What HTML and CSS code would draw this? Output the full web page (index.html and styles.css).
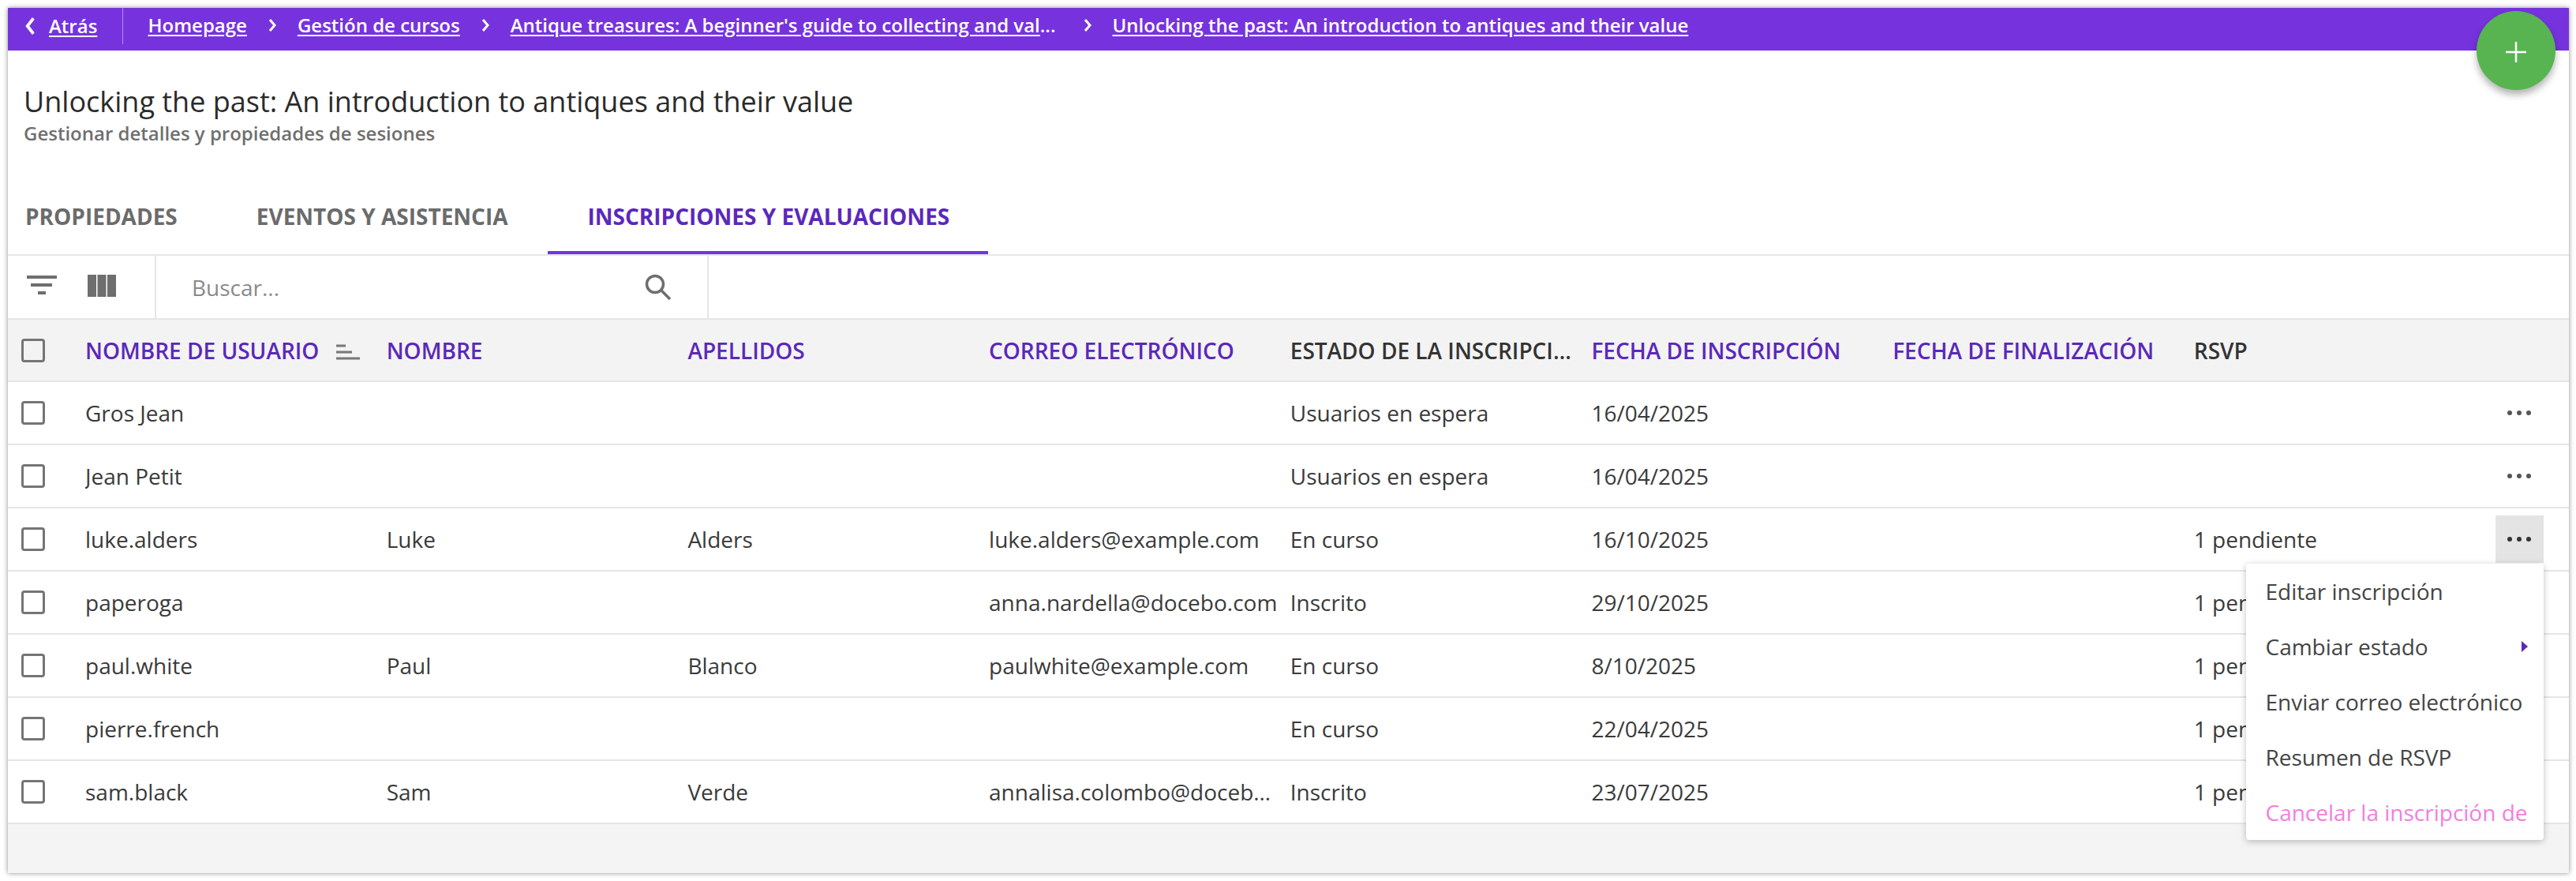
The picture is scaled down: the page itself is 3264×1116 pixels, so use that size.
FILE: index.html
```html
<!DOCTYPE html>
<html lang="es">
<head>
<meta charset="utf-8">
<title>Unlocking the past</title>
<link rel="stylesheet" href="styles.css">
</head>
<body>
<div class="frame">
  <nav class="crumbs">
    <div class="back">
      <svg class="chev-back" viewBox="0 0 12 24"><path d="M10 3 3 12l7 9"/></svg>
      <a href="#">Atrás</a>
    </div>
    <div class="trail">
      <a href="#">Homepage</a>
      <svg class="chev" viewBox="0 0 10 20"><path d="M2 3l6 7-6 7"/></svg>
      <a href="#">Gestión de cursos</a>
      <svg class="chev" viewBox="0 0 10 20"><path d="M2 3l6 7-6 7"/></svg>
      <span class="trunc"><a href="#">Antique treasures: A beginner's guide to collecting and val</a>...</span>
      <svg class="chev" viewBox="0 0 10 20"><path d="M2 3l6 7-6 7"/></svg>
      <a href="#">Unlocking the past: An introduction to antiques and their value</a>
    </div>
  </nav>
  <button class="fab" aria-label="Añadir"><svg viewBox="0 0 28 28"><path d="M14 1v26M1 14h26"/></svg></button>
  <header class="head">
    <h1>Unlocking the past: An introduction to antiques and their value</h1>
    <p>Gestionar detalles y propiedades de sesiones</p>
  </header>
  <div class="tabs">
    <a class="tab first">PROPIEDADES</a>
    <a class="tab">EVENTOS Y ASISTENCIA</a>
    <a class="tab active">INSCRIPCIONES Y EVALUACIONES</a>
  </div>
  <div class="toolbar">
    <div class="tools">
      <svg class="i-filter" viewBox="0 0 38 26"><path d="M0 3h38M5 13h27M14 23h10"/></svg>
      <svg class="i-cols" viewBox="0 0 36 28"><path d="M0 0h11v28H0zM12.500 0h11v28h-11zM25 0h11v28H25z"/></svg>
    </div>
    <div class="search">
      <span>Buscar...</span>
      <svg class="i-search" viewBox="0 0 34 34"><circle cx="13" cy="13" r="10.500"/><path d="M21 21 32 32"/></svg>
    </div>
  </div>
  <div class="table">
    <div class="row hdr">
      <div class="check"><i></i></div>
      <div class="cell link">NOMBRE DE USUARIO<svg class="i-sort" viewBox="0 0 30 20"><path d="M0 2h12M0 10h20M0 18h30"/></svg></div>
      <div class="cell link">NOMBRE</div>
      <div class="cell link">APELLIDOS</div>
      <div class="cell link">CORREO ELECTRÓNICO</div>
      <div class="cell">ESTADO DE LA INSCRIPCIÓN</div>
      <div class="cell link">FECHA DE INSCRIPCIÓN</div>
      <div class="cell link">FECHA DE FINALIZACIÓN</div>
      <div class="cell">RSVP</div>
      <div class="act"></div>
    </div>
    <div class="row">
      <div class="check"><i></i></div><div class="cell">Gros Jean</div><div class="cell"></div><div class="cell"></div><div class="cell"></div><div class="cell">Usuarios en espera</div><div class="cell">16/04/2025</div><div class="cell"></div><div class="cell"></div>
      <div class="act"><span class="dots"><svg viewBox="0 0 30 6"><circle cx="3" cy="3" r="3"/><circle cx="15" cy="3" r="3"/><circle cx="27" cy="3" r="3"/></svg></span></div>
    </div>
    <div class="row">
      <div class="check"><i></i></div><div class="cell">Jean Petit</div><div class="cell"></div><div class="cell"></div><div class="cell"></div><div class="cell">Usuarios en espera</div><div class="cell">16/04/2025</div><div class="cell"></div><div class="cell"></div>
      <div class="act"><span class="dots"><svg viewBox="0 0 30 6"><circle cx="3" cy="3" r="3"/><circle cx="15" cy="3" r="3"/><circle cx="27" cy="3" r="3"/></svg></span></div>
    </div>
    <div class="row">
      <div class="check"><i></i></div><div class="cell">luke.alders</div><div class="cell">Luke</div><div class="cell">Alders</div><div class="cell">luke.alders@example.com</div><div class="cell">En curso</div><div class="cell">16/10/2025</div><div class="cell"></div><div class="cell">1 pendiente</div>
      <div class="act">
        <span class="dots open"><svg viewBox="0 0 30 6"><circle cx="3" cy="3" r="3"/><circle cx="15" cy="3" r="3"/><circle cx="27" cy="3" r="3"/></svg></span>
        <ul class="menu">
          <li>Editar inscripción</li>
          <li class="sub">Cambiar estado<svg class="i-tri" viewBox="0 0 8 14"><path d="M0 0l8 7-8 7z"/></svg></li>
          <li>Enviar correo electrónico</li>
          <li>Resumen de RSVP</li>
          <li class="danger">Cancelar la inscripción de</li>
        </ul>
      </div>
    </div>
    <div class="row">
      <div class="check"><i></i></div><div class="cell">paperoga</div><div class="cell"></div><div class="cell"></div><div class="cell">anna.nardella@docebo.com</div><div class="cell">Inscrito</div><div class="cell">29/10/2025</div><div class="cell"></div><div class="cell">1 pendiente</div><div class="act"></div>
    </div>
    <div class="row">
      <div class="check"><i></i></div><div class="cell">paul.white</div><div class="cell">Paul</div><div class="cell">Blanco</div><div class="cell">paulwhite@example.com</div><div class="cell">En curso</div><div class="cell">8/10/2025</div><div class="cell"></div><div class="cell">1 pendiente</div><div class="act"></div>
    </div>
    <div class="row">
      <div class="check"><i></i></div><div class="cell">pierre.french</div><div class="cell"></div><div class="cell"></div><div class="cell"></div><div class="cell">En curso</div><div class="cell">22/04/2025</div><div class="cell"></div><div class="cell">1 pendiente</div><div class="act"></div>
    </div>
    <div class="row">
      <div class="check"><i></i></div><div class="cell">sam.black</div><div class="cell">Sam</div><div class="cell">Verde</div><div class="cell">annalisa.colombo@docebo.com</div><div class="cell">Inscrito</div><div class="cell">23/07/2025</div><div class="cell"></div><div class="cell">1 pendiente</div><div class="act"></div>
    </div>
  </div>
</div>
</body>
</html>
```
FILE: styles.css
```css
* { box-sizing: border-box; }
html, body { height: 100%; }
html { overflow: hidden; }
body {
  margin: 0;
  padding: 10px;
  background: #fff;
  font-family: "Open Sans", "Noto Sans", sans-serif;
  font-size: 28px;
  color: #3a3a3a;
}
.frame {
  position: relative;
  width: 3245px;
  height: 1096px;
  background: #f4f4f4;
  box-shadow: 0 0 6px rgba(0,0,0,.45);
  display: flex;
  flex-direction: column;
}
.crumbs {
  height: 54px;
  background: #7633dd;
  color: #fff;
  display: flex;
  align-items: flex-start;
  font-size: 24px;
  font-weight: 600;
  line-height: 44px;
}
.crumbs a { color: #fff; text-decoration: underline; text-underline-offset: 3px; }
.back {
  width: 145.500px;
  height: 46px;
  border-right: 1px solid rgba(255,255,255,.45);
  display: flex;
  align-items: center;
  padding-left: 20px;
  gap: 16px;
}
.chev-back { width: 16px; height: 26px; fill: none; stroke: #fff; stroke-width: 3.500; }
.trail { display: flex; align-items: center; height: 44px; padding-left: 32px; white-space: nowrap; }
.trunc { padding-right: 8px; }
.chev { width: 10px; height: 20px; margin: 0 27px; fill: none; stroke: #fff; stroke-width: 3; }
.fab {
  position: absolute;
  top: 4px;
  right: 17px;
  width: 100px;
  height: 100px;
  border: 0;
  padding: 0;
  border-radius: 50%;
  background: #57b451;
  box-shadow: 0 6px 10px rgba(0,0,0,.3);
  display: flex;
  align-items: center;
  justify-content: center;
}
.fab svg { width: 28px; height: 28px; margin-top: 4px; fill: none; stroke: #fff; stroke-width: 2.500; }
.head { height: 170px; background: #fff; padding: 40px 20px 0; }
.head h1 { margin: 0; font-size: 36px; font-weight: 500; line-height: 50px; color: #2b2b2b; }
.head p { margin: 0; font-size: 24px; font-weight: 600; line-height: 30px; color: #6f6f6f; }
.tabs {
  height: 90px;
  display: flex;
  background: #fff;
  border-bottom: 2px solid #e6e6e6;
  font-weight: 700;
  font-size: 28px;
  color: #6b6b6b;
}
.tab { padding: 0 50px; line-height: 80px; height: 88px; }
.tab.first { padding-left: 22px; }
.tab.active { color: #5b28ba; border-bottom: 4px solid #7633dd; padding: 0 49px 0 51px; }
.toolbar { height: 81px; background: #fff; display: flex; border-bottom: 2px solid #e6e6e6; }
.tools { width: 188px; border-right: 2px solid #e6e6e6; display: flex; align-items: flex-start; padding: 24px 0 0 24px; gap: 39px; }
.i-filter { width: 38px; height: 26px; fill: none; stroke: #6e6e6e; stroke-width: 4; }
.i-cols { width: 36px; height: 28px; fill: #6e6e6e; }
.search { width: 700px; border-right: 2px solid #e6e6e6; display: flex; align-items: center; justify-content: space-between; padding: 0 45px 0 45px; color: #8a8a8a; font-size: 28px; }
.i-search { width: 34px; height: 34px; fill: none; stroke: #6e6e6e; stroke-width: 3.500; }
.row {
  display: grid;
  grid-template-columns: 98px repeat(8, 381.700px) 1fr;
  height: 80px;
  align-items: center;
  background: #fff;
  border-bottom: 2px solid #e6e6e6;
}
.row.hdr { background: #f3f3f3; height: 79px; font-weight: 600; color: #333; }
.check { padding-left: 17px; display: flex; }
.check i { width: 30px; height: 30px; border: 3px solid #757575; border-radius: 4px; background: #fff; }
.hdr .check i { background: transparent; }
.cell { min-width: 0; padding-right: 16px; white-space: nowrap; overflow: hidden; text-overflow: ellipsis; }
.link { color: #5b28ba; }
.i-sort { width: 30px; height: 20px; margin-left: 22px; fill: none; stroke: #777; stroke-width: 3; vertical-align: -1px; }
.act { position: relative; height: 100%; display: flex; align-items: center; width: 61px; }
.dots { width: 61px; height: 60px; display: flex; align-items: center; justify-content: center; }
.dots svg { width: 30px; height: 6px; fill: #555; }
.dots.open { background: #e4e4e4; }
.dots.open svg { fill: #333; }
.menu {
  position: absolute;
  top: 70px;
  right: 0;
  width: 377px;
  height: 350px;
  margin: 0;
  padding: 0 0 0 25px;
  list-style: none;
  background: #fff;
  border-radius: 4px;
  box-shadow: 0 2px 8px rgba(0,0,0,.25);
  z-index: 2;
}
.menu li { height: 70px; line-height: 70px; white-space: nowrap; overflow: hidden; color: #444; }
.menu li.sub { display: flex; justify-content: space-between; align-items: center; padding-right: 20px; }
.menu li.danger { color: #f27ee0; }
.i-tri { width: 8px; height: 14px; fill: #5b28ba; }
```
